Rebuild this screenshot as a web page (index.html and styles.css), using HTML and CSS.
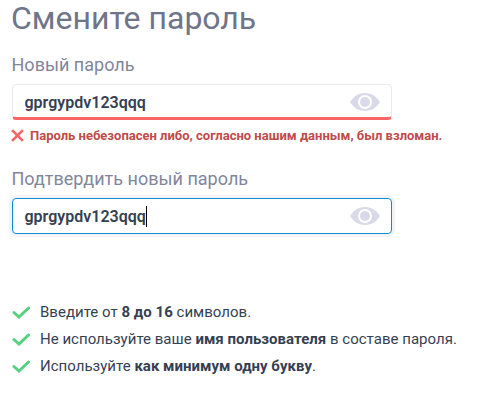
FILE: index.html
```html
<!DOCTYPE html>
<html lang="ru">
<head>
    <meta charset="UTF-8">
    <meta name="viewport" content="width=device-width, initial-scale=1.0">
    <title>Смените пароль</title>
    <link rel="stylesheet" href="styles.css">
</head>
<body>
    <form class="password-form">
        <h1 class="heading">Смените пароль</h1>

        <label class="label" for="newPassword">Новый пароль</label>
        <div class="field field-error">
            <input type="text" id="newPassword" value="gprgypdv123qqq">
            <svg class="eye" viewBox="0 0 30 20">
                <path fill-rule="evenodd" d="M15 1C8 1 3 5 0 10c3 5 8 9 15 9s12-4 15-9c-3-5-8-9-15-9zm0 2a7 7 0 1 1 0 14 7 7 0 0 1 0-14z"/>
                <circle cx="15" cy="10" r="5"/>
            </svg>
        </div>
        <div class="error">
            <svg class="cross" viewBox="0 0 12 12"><path d="M1 1l10 10M11 1L1 11"/></svg>
            <span>Пароль небезопасен либо, согласно нашим данным, был взломан.</span>
        </div>

        <label class="label" for="confirmPassword">Подтвердить новый пароль</label>
        <div class="field field-active">
            <div class="value" id="confirmPassword">gprgypdv123qqq<span class="caret"></span></div>
            <svg class="eye" viewBox="0 0 30 20">
                <path fill-rule="evenodd" d="M15 1C8 1 3 5 0 10c3 5 8 9 15 9s12-4 15-9c-3-5-8-9-15-9zm0 2a7 7 0 1 1 0 14 7 7 0 0 1 0-14z"/>
                <circle cx="15" cy="10" r="5"/>
            </svg>
        </div>

        <ul class="rules">
            <li><svg class="check" viewBox="0 0 18 14"><path d="M2 7.500l5 4.500 9.500-9"/></svg><span>Введите от <b>8 до 16</b> символов.</span></li>
            <li><svg class="check" viewBox="0 0 18 14"><path d="M2 7.500l5 4.500 9.500-9"/></svg><span>Не используйте ваше <b>имя пользователя</b> в составе пароля.</span></li>
            <li><svg class="check" viewBox="0 0 18 14"><path d="M2 7.500l5 4.500 9.500-9"/></svg><span>Используйте <b>как минимум одну букву</b>.</span></li>
        </ul>
    </form>
</body>
</html>
```
FILE: styles.css
```css
* {
    box-sizing: border-box;
}

body {
    margin: 0;
    background-color: #fff;
    color: #353f52;
    font-family: Roboto, sans-serif;
    overflow: hidden;
}

.password-form {
    padding-left: 12px;
}

.heading {
    margin: 0 0 18px -1px;
    color: #6f7489;
    font-size: 32px;
    font-weight: 400;
    line-height: 36px;
}

.label {
    display: block;
    height: 30px;
    margin-left: -0.5px;
    color: #81869c;
    font-size: 18px;
    line-height: 22px;
    letter-spacing: 0.02px;
}

.field {
    display: flex;
    align-items: center;
    width: 380px;
    height: 36px;
    padding: 0 11px 0 11.5px;
    border: 1px solid #e8e8ee;
    border-radius: 4px;
}

.field input,
.value {
    display: flex;
    align-items: center;
    flex: 1;
    min-width: 0;
    padding: 0;
    border: none;
    outline: none;
    background: none;
    color: #353f52;
    font-family: inherit;
    font-size: 16px;
    font-weight: 600;
}

.field-error {
    padding-top: 2px;
    border-bottom: 3px solid #f96464;
}

.field-active {
    border-color: #0d8bd0;
    box-shadow: 0 0 0 3px #f3f3f5;
}

.caret {
    width: 1px;
    height: 21px;
    background-color: #000;
}

.eye {
    width: 30px;
    height: 20px;
    fill: #d9d9e9;
}

.error {
    display: flex;
    align-items: center;
    height: 30px;
    margin: 0 0 18px -1px;
    color: #c04b4b;
    font-size: 13px;
    font-weight: 700;
}

.cross {
    width: 13px;
    height: 13px;
    margin-right: 6px;
    fill: none;
    stroke: #f96464;
    stroke-width: 2.5;
}

.rules {
    margin: 64px 0 0;
    padding: 0;
    list-style: none;
}

.rules li {
    display: flex;
    align-items: center;
    height: 27px;
    font-size: 15px;
    letter-spacing: 0.02px;
    white-space: nowrap;
}

.rules b {
    font-weight: 700;
}

.check {
    width: 18px;
    height: 14px;
    margin-right: 10px;
    fill: none;
    stroke: #57d080;
    stroke-width: 3;
    stroke-linecap: round;
}
```
